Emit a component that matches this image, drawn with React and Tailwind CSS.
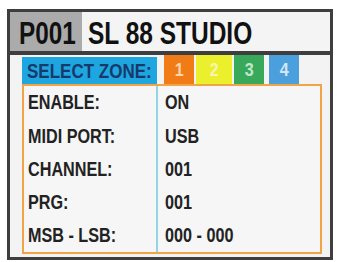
import React from "react";

const font = { fontFamily: '"Liberation Sans", Arial, sans-serif' };

const rows = [
  ["ENABLE:", "ON"],
  ["MIDI PORT:", "USB"],
  ["CHANNEL:", "001"],
  ["PRG:", "001"],
  ["MSB - LSB:", "000 - 000"],
];

export default function App() {
  return (
    <div className="w-[340px] h-[262px] bg-white pt-[9px] pl-[7px]" style={font}>
      <div className="w-[326px] h-[251px] border-[3px] border-[#3e3e3e] flex flex-col bg-[#f3f3f3]">
        <div className="h-[39px] flex border-b-[4px] border-[#3e3e3e] box-content">
          <div className="w-[72px] h-full bg-[#ababab] pl-[9px] pt-[3px] flex items-center">
            <span className="inline-block origin-left scale-x-[0.76] text-[32px] font-bold text-[#111] leading-none whitespace-nowrap">
              P001
            </span>
          </div>
          <div className="flex-1 h-full bg-[#f4f4f4] pl-[6px] pt-[3px] flex items-center">
            <span className="inline-block origin-left scale-x-[0.79] text-[31px] font-bold text-[#111] leading-none whitespace-nowrap">
              SL 88 STUDIO
            </span>
          </div>
        </div>
        <div className="flex-1 flex flex-col pl-[12px]">
          <div className="h-[29px] flex items-start">
            <div className="w-[135px] h-[27px] mt-[2px] bg-[#1ea6e0] pl-[5px] flex items-center overflow-hidden">
              <span className="inline-block origin-left scale-x-[0.81] text-[21px] font-bold text-[#163a6c] leading-none whitespace-nowrap">
                SELECT ZONE:
              </span>
            </div>
            <div className="ml-[7px] w-[30px] h-[31px] bg-[#f07b17] flex justify-center pt-[5px]">
              <span className="inline-block scale-x-[0.85] text-[19px] font-bold text-[#f8d2ad] leading-none">1</span>
            </div>
            <div className="ml-[2px] w-[36px] h-[29px] bg-[#ecef2c] flex items-center justify-center">
              <span className="inline-block scale-x-[0.85] text-[19px] font-bold text-[#f6f6b2] leading-none">2</span>
            </div>
            <div className="ml-[2px] w-[30px] h-[29px] bg-[#38a95a] flex items-center justify-center">
              <span className="inline-block scale-x-[0.85] text-[19px] font-bold text-[#c2e6cb] leading-none">3</span>
            </div>
            <div className="ml-[5px] w-[30px] h-[29px] bg-[#4b9fdc] flex items-center justify-center">
              <span className="inline-block scale-x-[0.85] text-[19px] font-bold text-[#d3e6f6] leading-none">4</span>
            </div>
          </div>
          <div className="w-[300px] h-[170px] border-2 border-[#f0a446] bg-[#f6f6f6] flex">
            <div className="w-[134px] border-r-[2px] border-[#93d4e6] grid grid-rows-5">
              {rows.map(([l]) => (
                <div key={l} className="flex items-center pl-[4px] pt-[1px]">
                  <span className="inline-block origin-left scale-x-[0.83] text-[19.5px] font-bold text-[#222] leading-none whitespace-nowrap">
                    {l}
                  </span>
                </div>
              ))}
            </div>
            <div className="flex-1 grid grid-rows-5">
              {rows.map(([l, v]) => (
                <div key={l} className="flex items-center pl-[7px] pt-[1px]">
                  <span className="inline-block origin-left scale-x-[0.83] text-[19.5px] font-bold text-[#222] leading-none whitespace-nowrap">
                    {v}
                  </span>
                </div>
              ))}
            </div>
          </div>
        </div>
      </div>
    </div>
  );
}
